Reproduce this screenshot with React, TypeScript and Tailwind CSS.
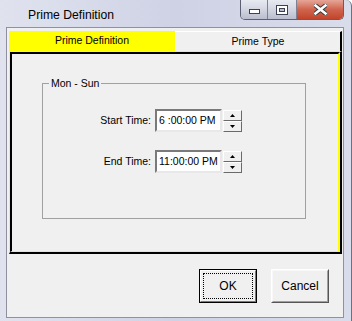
import React from 'react';

const font = { fontFamily: '"Liberation Sans", Arial, sans-serif' };

const SpinArrow = ({ up }: { up: boolean }) => (
  <svg width="5" height="3" viewBox="0 0 5 3">
    {up ? <polygon points="2.5,0 5,3 0,3" fill="#000" /> : <polygon points="0,0 5,0 2.5,3" fill="#000" />}
  </svg>
);

const TimeBox = ({ value }: { value: string }) => (
  <div className="flex items-center gap-[1px]">
    <div className="w-[67px] h-[23px] bg-white border-2 border-t-[#7a7a7a] border-l-[#7a7a7a] border-r-[#e8e8e8] border-b-[#e8e8e8] flex items-center pl-[2px] text-[10.5px] text-black whitespace-nowrap">
      {value}
    </div>
    <div className="flex flex-col">
      <div className="w-[19px] h-[11px] bg-[#f0f0f0] border border-t-white border-l-white border-r-[#6a6a6a] border-b-[#6a6a6a] flex items-center justify-center">
        <SpinArrow up />
      </div>
      <div className="w-[19px] h-[11px] bg-[#f0f0f0] border border-t-white border-l-white border-r-[#6a6a6a] border-b-[#6a6a6a] flex items-center justify-center">
        <SpinArrow up={false} />
      </div>
    </div>
  </div>
);

const WindowButtons = () => (
  <div className="flex h-[20px] self-start rounded-b-[5px] border border-t-0 border-[#5b6072] overflow-hidden">
    <div className="w-[27px] bg-gradient-to-b from-[#e8eaf1] via-[#d3d6e2] to-[#b9bdcd] border-r border-[#7d8191] flex items-end justify-center pb-[5px]">
      <svg width="11" height="5"><rect x="0.5" y="0.5" width="10" height="4" fill="#fff" stroke="#3c4152" /></svg>
    </div>
    <div className="w-[29px] bg-gradient-to-b from-[#e8eaf1] via-[#d3d6e2] to-[#b9bdcd] border-r border-[#7d8191] flex items-center justify-center">
      <svg width="12" height="10">
        <rect x="0.5" y="0.5" width="11" height="9" fill="#fff" stroke="#3c4152" />
        <rect x="3.5" y="3.5" width="5" height="3" fill="#b9bdcd" stroke="#3c4152" />
      </svg>
    </div>
    <div className="w-[46px] bg-gradient-to-b from-[#e6a597] via-[#d0644d] to-[#c2432a] flex items-center justify-center">
      <svg width="13" height="11" viewBox="0 0 13 11">
        <path d="M1.5 1.5 L11.5 9.5 M11.5 1.5 L1.5 9.5" stroke="#3c3c3c" strokeWidth="4.5" strokeLinecap="square" />
        <path d="M1.5 1.5 L11.5 9.5 M11.5 1.5 L1.5 9.5" stroke="#fff" strokeWidth="2.5" strokeLinecap="square" />
      </svg>
    </div>
  </div>
);

export default function App() {
  return (
    <div
      style={font}
      className="w-[352px] h-[321px] flex flex-col pl-[6px] pr-[7px] pb-[3px] bg-gradient-to-r from-[#e0e3ee] via-[#cfd2e5] to-[#d9dcea] border-r border-[#6b7082] rounded-tr-[6px]"
    >
      {/* title bar */}
      <div className="h-[27px] flex justify-between">
        <div className="pl-[22px] pt-[6px] text-[12.2px] text-black">Prime Definition</div>
        <WindowButtons />
      </div>

      {/* client area */}
      <div className="flex-1 flex flex-col bg-[#f0f0f0] border border-[#8f929e] pt-[3px] pl-[2px] pr-[1px]">
        {/* tabs */}
        <div className="flex h-[20px] text-[10.5px] text-black">
          <div className="w-[166px] bg-[#ffff00] flex items-center justify-center">Prime Definition</div>
          <div className="flex-1 bg-[#f0f0f0] border-t border-l border-white border-r-2 border-r-black flex items-center justify-center">
            Prime Type
          </div>
        </div>

        {/* tab panel */}
        <div className="h-[203px] border-t border-l border-[#ffff00] border-r-2 border-b-2 border-r-black border-b-black">
          <div className="h-full border-t-2 border-l-2 border-black border-r-2 border-b border-r-[#ffff00] border-b-[#ffff00] pt-[29px] pl-[30px] pr-[32px]">
            <div className="relative h-[136px] border border-[#a0a0a0] text-[10.5px] text-black">
              <span className="absolute left-[6px] -top-[7px] bg-[#f0f0f0] px-[2px] leading-[12px]">Mon - Sun</span>
              <div className="pt-[25px] flex flex-col gap-[18px]">
                <div className="flex items-center">
                  <div className="w-[112px] text-right pr-[4px]">Start Time:</div>
                  <TimeBox value="6 :00:00 PM" />
                </div>
                <div className="flex items-center">
                  <div className="w-[112px] text-right pr-[4px]">End Time:</div>
                  <TimeBox value="11:00:00 PM" />
                </div>
              </div>
            </div>
          </div>
        </div>

        {/* buttons */}
        <div className="flex justify-end gap-[14px] pt-[15px] pr-[13px] text-[12px] text-black">
          <div className="w-[58px] h-[34px] border border-black">
            <div className="h-full border border-t-white border-l-white border-r-[#7a7a7a] border-b-[#7a7a7a] p-[2px]">
              <div className="h-full border border-dotted border-black flex items-center justify-center">OK</div>
            </div>
          </div>
          <div className="w-[58px] h-[34px] border border-t-white border-l-white border-r-[#555] border-b-[#555]">
            <div className="h-full border border-t-[#f8f8f8] border-l-[#f8f8f8] border-r-[#a0a0a0] border-b-[#a0a0a0] flex items-center justify-center">
              Cancel
            </div>
          </div>
        </div>
      </div>
    </div>
  );
}
